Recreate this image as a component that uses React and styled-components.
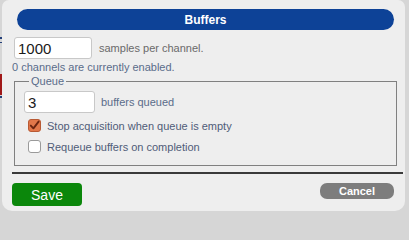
import React, { useState } from "react";
import styled, { createGlobalStyle } from "styled-components";

const Global = createGlobalStyle`
  html, body { margin: 0; padding: 0; }
  body {
    background: #d6d6d6;
    font-family: "Liberation Sans", Arial, sans-serif;
    width: 409px;
    height: 211px;
    overflow: hidden;
  }
`;

const Page = styled.div`
  display: flex;
  height: 211px;
`;

const BackdropEdge = styled.div`
  width: 2px;
  flex: none;
  background: linear-gradient(
    to bottom,
    #d6d6d6 0 37px,
    #24407a 37px 39px,
    #d6d6d6 39px 42px,
    #24407a 42px 43px,
    #d6d6d6 43px 74px,
    #a01818 74px 95px,
    #d6d6d6 95px 96px,
    #24407a 96px 98px,
    #d6d6d6 98px
  );
`;

const Dialog = styled.div`
  width: 403px;
  height: 211px;
  background: #eeeeee;
  border-radius: 7px 7px 10px 10px;
  box-sizing: border-box;
  display: flex;
  flex-direction: column;
  padding: 9px 11px 0 10px;
`;

const TitleBar = styled.div`
  height: 21px;
  margin-left: 5px;
  background: #0d4297;
  border-radius: 11px;
  color: #ffffff;
  font-weight: bold;
  font-size: 12px;
  display: flex;
  align-items: center;
  justify-content: center;
`;

const Row = styled.div`
  display: flex;
  align-items: center;
  gap: ${(p) => p.$gap || 7}px;
  margin-top: ${(p) => p.$top || 0}px;
  margin-left: ${(p) => p.$left || 0}px;
`;

const TextInput = styled.input`
  width: ${(p) => p.$w}px;
  height: 22px;
  box-sizing: border-box;
  border: 1px solid #c8c8c8;
  border-radius: 3px;
  background: #ffffff;
  font-family: "Liberation Sans", Arial, sans-serif;
  font-size: 15px;
  color: #1a1a1a;
  padding: 0 0 0 3px;
  outline: none;
`;

const Hint = styled.span`
  font-size: 11px;
  color: ${(p) => p.$color || "#6a6a6a"};
`;

const Note = styled.div`
  font-size: 11px;
  line-height: 13px;
  color: #5a6c8a;
  margin-top: 2px;
`;

const Fieldset = styled.fieldset`
  margin: 1px 0 0 2px;
  width: 383px;
  box-sizing: border-box;
  height: 91px;
  border: 1px solid #808080;
  border-radius: 0;
  padding: 3px 0 0 9px;
  display: flex;
  flex-direction: column;
`;

const Legend = styled.legend`
  font-size: 11px;
  color: #5a6c8a;
  padding: 0 2px;
  margin-left: 5px;
  line-height: 13px;
`;

const CheckRow = styled.label`
  display: flex;
  align-items: center;
  gap: 6px;
  margin-top: ${(p) => p.$top}px;
  margin-left: 4px;
  font-size: 11px;
  color: #505c78;
  cursor: pointer;
`;

const Box = styled.span`
  width: 13px;
  height: 13px;
  box-sizing: border-box;
  border-radius: 3px;
  border: 1px solid ${(p) => (p.$on ? "#b85a34" : "#9a9a9a")};
  background: ${(p) => (p.$on ? "#e2774a" : "#ffffff")};
  display: flex;
  align-items: center;
  justify-content: center;
  flex: none;
`;

const Divider = styled.div`
  height: 0;
  border-top: 2px solid #3a3a3a;
  margin: 6px -9px 0 0;
`;

const Footer = styled.div`
  display: flex;
  justify-content: space-between;
  align-items: flex-start;
  margin-top: 9px;
`;

const SaveButton = styled.button`
  width: 70px;
  height: 23px;
  border: none;
  border-radius: 4px;
  background: #0b870b;
  color: #ffffff;
  font-family: "Liberation Sans", Arial, sans-serif;
  font-size: 14px;
  padding: 0;
`;

const CancelButton = styled.button`
  width: 74px;
  height: 16px;
  border: none;
  border-radius: 7px;
  background: #7d7d7d;
  color: #ffffff;
  font-family: "Liberation Sans", Arial, sans-serif;
  font-weight: bold;
  font-size: 11px;
  padding: 0;
  line-height: 16px;
`;

function Check({ on, onToggle, children, top }) {
  return (
    <CheckRow $top={top} onClick={onToggle}>
      <Box $on={on}>
        {on && (
          <svg width="11" height="11" viewBox="0 0 11 11">
            <path
              d="M1.8 5.6 L4.4 8.3 L9.6 1.6"
              fill="none"
              stroke="#6a2410"
              strokeWidth="1.9"
              strokeLinecap="round"
              strokeLinejoin="round"
            />
          </svg>
        )}
      </Box>
      <span>{children}</span>
    </CheckRow>
  );
}

export default function App() {
  const [stop, setStop] = useState(true);
  const [requeue, setRequeue] = useState(false);
  return (
    <>
      <Global />
      <Page>
        <BackdropEdge />
        <Dialog>
          <TitleBar>Buffers</TitleBar>
          <Row $top={7} $gap={7} $left={2}>
            <TextInput $w={78} defaultValue="1000" />
            <Hint>samples per channel.</Hint>
          </Row>
          <Note>0 channels are currently enabled.</Note>
          <Fieldset>
            <Legend>Queue</Legend>
            <Row $gap={6}>
              <TextInput $w={71} defaultValue="3" />
              <Hint $color="#5a6c8a">buffers queued</Hint>
            </Row>
            <Check top={6} on={stop} onToggle={() => setStop(!stop)}>
              Stop acquisition when queue is empty
            </Check>
            <Check top={8} on={requeue} onToggle={() => setRequeue(!requeue)}>
              Requeue buffers on completion
            </Check>
          </Fieldset>
          <Divider />
          <Footer>
            <SaveButton>Save</SaveButton>
            <CancelButton>Cancel</CancelButton>
          </Footer>
        </Dialog>
      </Page>
    </>
  );
}
